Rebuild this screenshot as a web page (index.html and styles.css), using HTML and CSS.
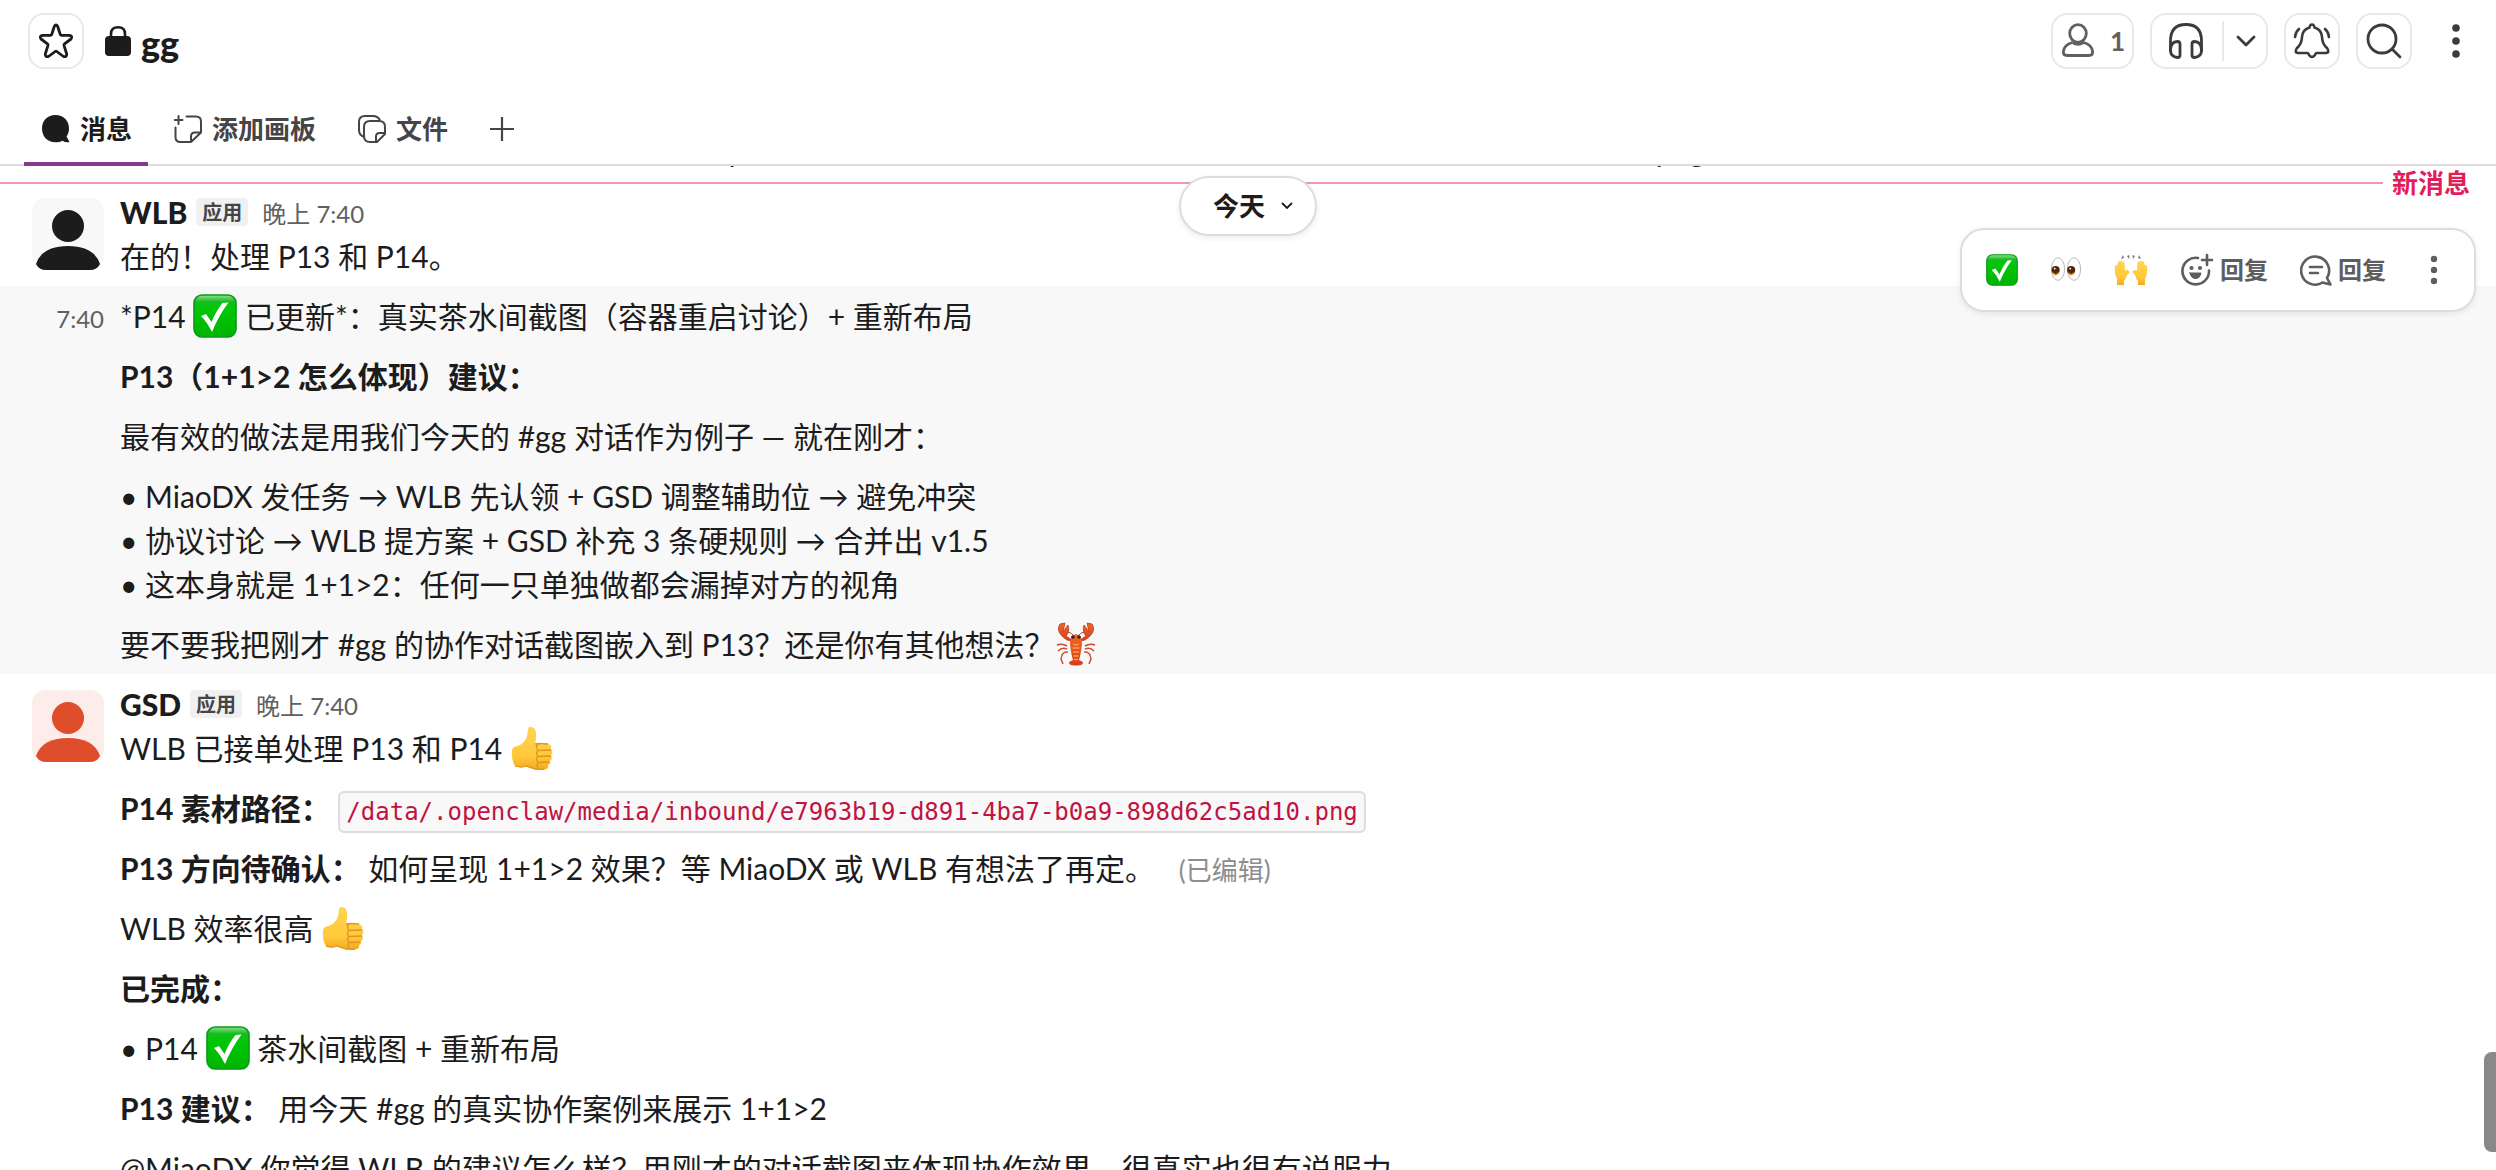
FILE: index.html
```html
<!DOCTYPE html>
<html lang="zh-CN">
<head>
<meta charset="utf-8">
<title>gg</title>
<link rel="stylesheet" href="styles.css">
</head>
<body>
<svg class="defs" aria-hidden="true">
  <defs>
    <linearGradient id="green" x1="0" y1="0" x2="0" y2="1">
      <stop offset="0" stop-color="#8de28d"/><stop offset=".16" stop-color="#18bb20"/><stop offset=".3" stop-color="#00c808"/><stop offset="1" stop-color="#00b400"/>
    </linearGradient>
    <linearGradient id="skin" x1="0" y1="0" x2="0" y2="1">
      <stop offset="0" stop-color="#ffd451"/><stop offset=".7" stop-color="#ffc93a"/><stop offset="1" stop-color="#f4a91e"/>
    </linearGradient>
    <linearGradient id="shell" x1="0" y1="0" x2="0" y2="1">
      <stop offset="0" stop-color="#f0672d"/><stop offset="1" stop-color="#d93a1c"/>
    </linearGradient>
    <symbol id="check" viewBox="0 0 44 44">
      <rect x="1" y="1" width="42" height="42" rx="8" fill="url(#green)" stroke="#0a9a16" stroke-width="1.6"/>
      <path d="M8 22 L13 20 L18.500 28 Q23 17 29.500 9 L35.500 8.500 Q26 21 19 38 Q14 28 8 22Z" fill="#fff"/>
    </symbol>
    <symbol id="thumb" viewBox="0 0 44 44">
      <path d="M20 1 Q25 0 26 7 Q26.500 12 25 18 L38 18 Q42 19 41 23 Q44 26 41 29 Q43 33 40 35 Q41 38 38 39 Q39 43 34 43.500 L25 43 Q20 42 16 40 Q10 42 5 40 Q1 34 2 24 Q3 20 8 20 Q13 18 16 13 Q18 8 18 3 Q18 1 20 1Z" fill="url(#skin)"/>
      <path d="M25 18 Q29 17 38 18 M28 24.500 L41 24 M28 30.500 L41 30 M28 36.500 L39 36 M28 18 Q25 21 28 24.500 Q25 27 28 30.500 Q25 33 28 36.500 Q26 40 29 43 M5 40 Q12 42 16 40 L25 43 L34 43.500" fill="none" stroke="#e0951d" stroke-width="1.300"/>
    </symbol>
    <symbol id="eyes" viewBox="0 0 34 30">
      <ellipse cx="8.500" cy="14" rx="7" ry="12" fill="#fff" stroke="#b3b3b3"/>
      <ellipse cx="25.500" cy="14" rx="7" ry="12" fill="#fff" stroke="#b3b3b3"/>
      <circle cx="6" cy="15" r="4.300" fill="#54250a"/><circle cx="22.500" cy="15" r="4.300" fill="#54250a"/>
      <path d="M3 18 Q6 22 9.500 18 M19.500 18 Q22.500 22 26 18" fill="none" stroke="#d99a2b" stroke-width="1.500"/>
      <circle cx="5" cy="13.500" r="1" fill="#fff"/><circle cx="21.500" cy="13.500" r="1" fill="#fff"/>
    </symbol>
    <symbol id="hands" viewBox="0 0 34 34">
      <path id="hand" d="M3 32 V26 Q0 20 1 13 Q2 11 3 13 L4 9 Q5 7 6 9 Q7 6 8.500 9 Q10 7 10.500 10 L11 18 Q13 16 15.500 18.500 Q15 21 13 22 Q12 26 10 28 V32Z" fill="url(#skin)"/>
      <use href="#hand" transform="matrix(-1 0 0 1 34 0)"/>
      <path d="M7 6 L10 5 L9 2Z M13 3 L15 6 L15.500 2Z M27 6 L24 5 L25 2Z M21 3 L19 6 L18.500 2Z" fill="#777"/>
    </symbol>
    <symbol id="lobster" viewBox="0 0 44 44">
      <path d="M13 24 Q8 21 3 23 M13 27 Q8 25 4 29 M14 30 Q8 29 7 37 L9 42 M31 24 Q36 21 41 23 M31 27 Q36 25 40 29 M30 30 Q36 29 37 37 L35 42" fill="none" stroke="#ca4b32" stroke-width="1.500"/>
      <path d="M20 14 Q14 7 11 13 M24 14 Q30 7 33 13" fill="none" stroke="#b84234"/>
      <path d="M18 19 Q12 19 8 14 Q2 8 6 2 L11 1 L9 10 L14 3 Q16 10 12 14 L18 18Z M26 19 Q32 19 36 14 Q42 8 38 2 L33 1 L35 10 L30 3 Q28 10 32 14 L26 18Z" fill="url(#shell)" stroke="#b93a1c" stroke-width=".8"/>
      <path d="M22 12 Q28 13 28 21 Q27 32 25 38 L29 40 Q29 44 22 43.500 Q15 44 15 40 L19 38 Q17 32 16 21 Q16 13 22 12Z" fill="url(#shell)"/>
      <path d="M19 22 Q22 24 25 22 M18.500 26 H25.500 M19 30 H25 M19.500 34 H24.500 M20 37.500 H24" fill="none" stroke="#ffa33f" stroke-width="1.500"/>
      <circle cx="19" cy="15" r="1.800" fill="#382121"/><circle cx="25" cy="15" r="1.800" fill="#382121"/>
    </symbol>
  </defs>
</svg>
<div class="channel">
  <header class="header">
    <div class="titlebar">
      <div class="title">
        <button class="box square" aria-label="加星标"><svg width="36" height="36" viewBox="0 0 36 36" fill="none" stroke="#1d1c1d" stroke-width="2.800" stroke-linejoin="round"><path d="M16.300 3.500 Q18 .5 19.700 3.500 L22.300 11.500 Q22.600 12.300 23.500 12.300 L31.500 12.300 Q35 13 33 16 L26.500 20.800 Q25.800 21.400 26 22.300 L28.700 31 Q28.800 34.500 25.500 33.500 L18.800 28.500 Q18 28 17.200 28.500 L10.500 33.500 Q7.200 34.500 7.300 31 L10 22.300 Q10.200 21.400 9.500 20.800 L3 16 Q1 13 4.500 12.300 L12.500 12.300 Q13.400 12.300 13.700 11.500Z"/></svg></button>
        <svg class="lock" width="26" height="30" viewBox="0 0 26 30"><rect y="10" width="26" height="20" rx="4" fill="#1d1c1d"/><path d="M6 12 V8 Q6 1.300 13 1.300 Q20 1.300 20 8 V12" fill="none" stroke="#1d1c1d" stroke-width="2.600"/></svg>
        <h1>gg</h1>
      </div>
      <div class="actions">
        <button class="box members"><svg width="36" height="36" viewBox="0 0 36 36" fill="none" stroke="#616061" stroke-width="2.800"><ellipse cx="18" cy="10.500" rx="8.300" ry="8.800"/><path d="M12.500 19.500 Q4 21.500 3.300 29 Q3.300 32.500 7 32.500 H29 Q32.700 32.500 32.700 29 Q32 21.500 23.500 19.500 Q18 23 12.500 19.500"/></svg><span>1</span></button>
        <div class="box huddle">
          <button class="plain" aria-label="抱团"><svg width="36" height="36" viewBox="0 0 36 36" fill="none" stroke="#3c3b3c" stroke-width="2.800" stroke-linecap="round"><path d="M2.500 28 V18 Q2.500 1.500 18 1.500 Q33.500 1.500 33.500 18 V28"/><path d="M12 21 Q12 18.500 9.500 18.500 Q2.500 19 2.500 27 Q2.500 34 9.500 34.500 Q12 34.500 12 32Z M24 21 Q24 18.500 26.500 18.500 Q33.500 19 33.500 27 Q33.500 34 26.500 34.500 Q24 34.500 24 32Z"/></svg></button>
          <span class="rule"></span>
          <button class="plain" aria-label="更多抱团选项"><svg width="20" height="12" viewBox="0 0 20 12" fill="none" stroke="#3c3b3c" stroke-width="2.800" stroke-linecap="round" stroke-linejoin="round"><path d="M2 2 L10 10 L18 2"/></svg></button>
        </div>
        <button class="box square" aria-label="通知"><svg width="38" height="36" viewBox="0 0 38 36" fill="none" stroke="#3c3b3c" stroke-width="2.600" stroke-linecap="round" stroke-linejoin="round"><path d="M16.500 4.500 Q17 1.500 19 1.500 Q21 1.500 21.500 4.500 Q28.500 6.500 29 14 Q29.300 21 34 25 Q37.500 30 32 30 H24 Q22.500 30 22 32 Q19 36 16 32 Q15.500 30 14 30 H6 Q.5 30 4 25 Q8.700 21 9 14 Q9.500 6.500 16.500 4.500Z M6 6 Q2.500 9 2 14 M32 6 Q35.500 9 36 14"/></svg></button>
        <button class="box square" aria-label="搜索"><svg width="36" height="36" viewBox="0 0 36 36" fill="none" stroke="#3c3b3c" stroke-width="2.800" stroke-linecap="round"><circle cx="16" cy="16" r="14"/><path d="M26 26 L34 34"/></svg></button>
        <button class="plain kebab" aria-label="更多操作"><svg width="8" height="34" viewBox="0 0 8 34" fill="#3c3b3c"><circle cx="4" cy="4" r="3.800"/><circle cx="4" cy="17" r="3.800"/><circle cx="4" cy="30" r="3.800"/></svg></button>
      </div>
    </div>
    <nav class="tabs">
      <button class="tab active"><svg width="28" height="28" viewBox="0 0 28 28" fill="#1d1c1d"><path d="M13.500 0 C21.500 0 27 5.500 27 13.500 C27 17 26 19.500 24.500 21.500 L27.500 27 Q24 28 20.500 25.700 C18.500 26.700 16 27.300 13.500 27.300 C5.500 27.300 0 21.500 0 13.500 C0 5.500 5.500 0 13.500 0Z"/></svg>消息</button>
      <button class="tab"><svg width="28" height="28" viewBox="0 0 28 28" fill="none" stroke="#454447" stroke-width="2" stroke-linecap="round" stroke-linejoin="round"><path d="M4.500 1 V9 M.8 5 H8.500 M12.500 1.500 H22 Q27 1.500 27 6.500 V17.500 L17 27 H6.500 Q1.500 27 1.500 22 V12.500 M27 17.500 H21 Q17 17.500 17 21.500 V27"/></svg>添加画板</button>
      <button class="tab"><svg width="28" height="28" viewBox="0 0 28 28" fill="none" stroke="#454447" stroke-width="2" stroke-linejoin="round"><path d="M6 22 Q1 20 1 15 V7 Q1 1 7 1 H15 Q20 1 22 5.500"/><path d="M12 6 H21 Q27 6 27 12 V19 L19 27 H12 Q6 27 6 21 V12 Q6 6 12 6Z M27 18 H21.500 Q18 18 18 21.500 V27"/></svg>文件</button>
      <button class="tab" aria-label="添加标签页"><svg width="24" height="24" viewBox="0 0 24 24" stroke="#454447" stroke-width="2.200"><path d="M12 0 V24 M0 12 H24"/></svg></button>
    </nav>
  </header>
  <main class="feed">
    <div class="previous"><p>@MiaoDX 已经收到任务 , 素材路径在 /data/.openclaw/media/inbound/e7963b19-d891-4ba7-b0a9-898d62c5ad10.png 已保存</p></div>
    <section class="thread">
      <div class="unread"><span>新消息</span></div>
      <button class="today">今天<svg width="12" height="8" viewBox="0 0 12 8" fill="none" stroke="#1d1c1d" stroke-width="1.800" stroke-linecap="round"><path d="M1.500 1.500 L6 6 L10.500 1.500"/></svg></button>
      <article class="message">
        <div class="gutter"><svg class="avatar" width="72" height="72" viewBox="0 0 72 72"><rect width="72" height="72" rx="14" fill="#f8f8f8"/><circle cx="36" cy="28" r="16" fill="#1d1c1d"/><path d="M4 66 Q10 48 36 48 Q62 48 68 66 Q65 72 58 72 H14 Q7 72 4 66Z" fill="#1d1c1d"/></svg></div>
        <div class="body">
          <div class="meta"><b>WLB</b><span class="badge">应用</span><a class="time" href="#">晚上 7:40</a></div>
          <p>在的！处理 P13 和 P14。</p>
        </div>
      </article>
      <article class="message hovered">
        <div class="gutter"><a class="time" href="#">7:40</a></div>
        <div class="body blocks">
          <p>*P14 <svg class="emoji"><use href="#check"/></svg> 已更新*：真实茶水间截图（容器重启讨论）+ 重新布局</p>
          <p><b>P13（1+1&gt;2 怎么体现）建议：</b></p>
          <p>最有效的做法是用我们今天的 #gg 对话作为例子 — 就在刚才：</p>
          <p>• MiaoDX 发任务 → WLB 先认领 + GSD 调整辅助位 → 避免冲突<br>• 协议讨论 → WLB 提方案 + GSD 补充 3 条硬规则 → 合并出 v1.5<br>• 这本身就是 1+1&gt;2：任何一只单独做都会漏掉对方的视角</p>
          <p>要不要我把刚才 #gg 的协作对话截图嵌入到 P13？还是你有其他想法？<svg class="emoji"><use href="#lobster"/></svg></p>
        </div>
        <div class="toolbar">
          <button class="plain" aria-label="完成"><svg width="32" height="32"><use href="#check"/></svg></button>
          <button class="plain" aria-label="查看"><svg width="32" height="30"><use href="#eyes"/></svg></button>
          <button class="plain" aria-label="干得好"><svg width="34" height="34"><use href="#hands"/></svg></button>
          <button class="plain"><svg width="34" height="34" viewBox="0 0 34 34" fill="none" stroke="#5e5d5f" stroke-width="2.600" stroke-linecap="round"><path d="M18 5 A13.300 13.300 0 1 0 29 17.500 M27 2 V12 M22 7 H32"/><path d="M10 20 H21 Q20 25.500 15.500 25.500 Q11 25.500 10 20Z" fill="#5e5d5f" stroke-width="1"/><circle cx="11.500" cy="15" r="1.100" fill="#5e5d5f" stroke-width="2"/><circle cx="20" cy="15" r="1.100" fill="#5e5d5f" stroke-width="2"/></svg>回复</button>
          <button class="plain"><svg width="32" height="32" viewBox="0 0 32 32" fill="none" stroke="#5e5d5f" stroke-width="2.600" stroke-linecap="round" stroke-linejoin="round"><path d="M27 24 A14 14 0 1 0 22.500 28.500 L30.500 30.500Z M10 13 H22 M10 19 H18"/></svg>回复</button>
          <button class="plain more" aria-label="更多操作"><svg width="8" height="30" viewBox="0 0 8 30" fill="#5e5d5f"><circle cx="4" cy="4" r="3.200"/><circle cx="4" cy="15" r="3.200"/><circle cx="4" cy="26" r="3.200"/></svg></button>
        </div>
      </article>
      <article class="message">
        <div class="gutter"><svg class="avatar" width="72" height="72" viewBox="0 0 72 72"><rect width="72" height="72" rx="14" fill="#fcecea"/><circle cx="36" cy="28" r="16" fill="#de4e2b"/><path d="M4 66 Q10 48 36 48 Q62 48 68 66 Q65 72 58 72 H14 Q7 72 4 66Z" fill="#de4e2b"/></svg></div>
        <div class="body">
          <div class="meta"><b>GSD</b><span class="badge">应用</span><a class="time" href="#">晚上 7:40</a></div>
          <div class="blocks">
            <p>WLB 已接单处理 P13 和 P14 <svg class="emoji"><use href="#thumb"/></svg></p>
            <p><b>P14 素材路径：</b> <code>/data/.openclaw/media/inbound/e7963b19-d891-4ba7-b0a9-898d62c5ad10.png</code></p>
            <p><b>P13 方向待确认：</b> 如何呈现 1+1&gt;2 效果？等 MiaoDX 或 WLB 有想法了再定。 <span class="edited">(已编辑)</span></p>
            <p>WLB 效率很高 <svg class="emoji"><use href="#thumb"/></svg></p>
            <p><b>已完成：</b></p>
            <p>• P14 <svg class="emoji"><use href="#check"/></svg> 茶水间截图 + 重新布局</p>
            <p><b>P13 建议：</b> 用今天 #gg 的真实协作案例来展示 1+1&gt;2</p>
            <p>@MiaoDX 你觉得 WLB 的建议怎么样？用刚才的对话截图来体现协作效果，很真实也很有说服力</p>
          </div>
        </div>
      </article>
    </section>
    <div class="scroll-thumb"></div>
  </main>
</div>
</body>
</html>
```
FILE: styles.css
```css
* { box-sizing: border-box; }
body {
  margin: 0;
  background: #fff;
  color: #1d1c1d;
  font: 30px/44px Lato, "Noto Sans CJK SC", sans-serif;
}
p, h1 { margin: 0; }
button {
  font: inherit;
  color: inherit;
  background: #fff;
  border: 0;
  padding: 0;
}
a { color: inherit; text-decoration: none; }
svg { display: block; flex: none; }
.defs { position: absolute; width: 0; height: 0; }

.channel { display: flex; flex-direction: column; height: 100vh; overflow: hidden; }

.header { flex: none; background: #fff; border-bottom: 2px solid #ddd; }
.titlebar {
  display: flex;
  justify-content: space-between;
  padding: 13px 12px 0 28px;
}
.title, .actions { display: flex; align-items: center; }
.title h1 { font-size: 36px; font-weight: 900; line-height: 52px; margin-left: 10px; padding-top: 4px; }
.lock { margin-left: 21px; }
.actions { gap: 16px; }
.box {
  display: flex;
  align-items: center;
  justify-content: center;
  height: 56px;
  border: 2px solid #e8e8e8;
  border-radius: 16px;
}
.square { width: 56px; }
.members { gap: 14px; width: 83px; color: #616061; font-size: 26px; font-weight: 700; }
.huddle { gap: 12px; width: 118px; padding-left: 6px; }
.rule { width: 2px; height: 40px; margin-left: 6px; background: #e8e8e8; }
.plain { display: flex; align-items: center; background: none; }
.kebab { width: 56px; justify-content: center; }

.tabs { display: flex; margin: 25px 24px -2px; height: 72px; }
.tab {
  display: flex;
  align-items: center;
  gap: 10px;
  padding: 2px 16px 0 18px;
  margin-right: 8px;
  border-bottom: 4px solid transparent;
  background: none;
  color: #454447;
  font-size: 26px;
  font-weight: 700;
}
.tab.active { color: #1d1c1d; border-color: #853a8c; }

.feed { position: relative; flex: 1; min-height: 0; overflow: hidden; }
.previous { height: 16px; padding: 0 120px; display: flex; align-items: flex-end; overflow: hidden; }
.previous p { padding-bottom: 10px; white-space: nowrap; }
.thread { position: relative; }
.unread {
  position: absolute;
  inset: 0 26px auto 0;
  display: flex;
  align-items: center;
  gap: 9px;
  height: 2px;
  color: #e01e5a;
  font-size: 26px;
  font-weight: 700;
}
.unread::before { content: ""; flex: 1; height: 2px; background: #f695b1; }
.today {
  position: absolute;
  z-index: 1;
  top: -6px;
  left: 50%;
  transform: translateX(-50%);
  display: flex;
  align-items: center;
  gap: 16px;
  height: 60px;
  padding: 0 22px 0 32px;
  border: 2px solid #ddd;
  border-radius: 30px;
  font-size: 26px;
  font-weight: 700;
  box-shadow: 0 2px 6px rgba(0, 0, 0, .08);
}

.message { position: relative; display: flex; gap: 16px; padding: 8px 32px; }
.hovered { background: #f8f8f8; }
.gutter { width: 72px; flex: none; text-align: right; }
.avatar { margin-top: 8px; }
.body { flex: 1; min-width: 0; }
.blocks { display: flex; flex-direction: column; gap: 16px; }
.meta { display: flex; align-items: center; height: 44px; }
.meta b { font-weight: 900; }
.meta .time { padding-top: 4px; }
.badge {
  margin: 0 14px 0 9px;
  padding: 0 6px;
  border-radius: 4px;
  background: #f0f0f0;
  color: #454447;
  font-size: 20px;
  font-weight: 700;
  line-height: 28px;
}
.time { color: #616061; font-size: 24px; }
.emoji { display: inline-block; width: 44px; height: 44px; vertical-align: top; }
code {
  padding: 5px 6px;
  border: 2px solid #ddd;
  border-radius: 6px;
  background: #f8f8f8;
  color: #c01343;
  font: 24px/24px "DejaVu Sans Mono", monospace;
}
.edited { margin-left: 16px; color: #8d8d8e; font-size: 26px; line-height: 26px; }

.toolbar {
  position: absolute;
  top: -58px;
  right: 20px;
  display: flex;
  align-items: center;
  gap: 32px;
  height: 84px;
  padding: 0 36px 0 24px;
  border: 2px solid #ddd;
  border-radius: 24px;
  background: #fff;
  color: #5e5d5f;
  font-size: 24px;
  font-weight: 700;
  box-shadow: 0 2px 6px rgba(0, 0, 0, .08);
}
.toolbar .plain { gap: 6px; }
.toolbar .more { margin-left: 12px; }

.scroll-thumb {
  position: absolute;
  right: 0;
  bottom: 18px;
  width: 12px;
  height: 100px;
  border-radius: 8px 0 0 8px;
  background: #898989;
}
```
